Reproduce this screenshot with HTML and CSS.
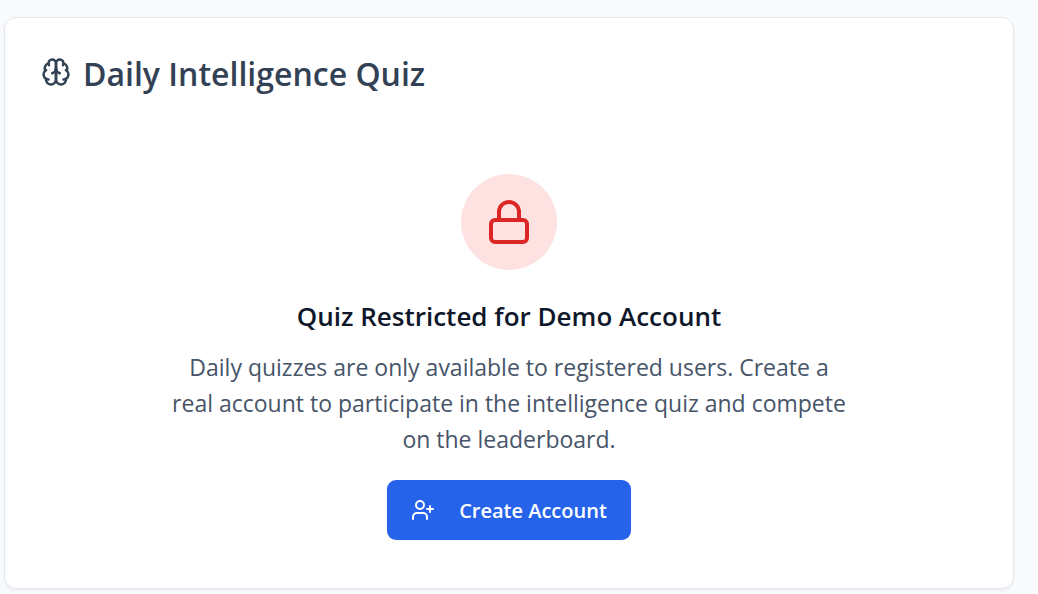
FILE: index.html
```html
<!DOCTYPE html>
<html lang="en">
<head>
<meta charset="utf-8">
<meta name="viewport" content="width=device-width, initial-scale=1">
<title>Daily Intelligence Quiz</title>
<link rel="stylesheet" href="styles.css">
</head>
<body>
<main class="page">
  <section class="card">
    <header class="card-header">
      <svg class="icon icon-brain" viewBox="0 0 24 24" aria-hidden="true">
        <path d="M12 5a3 3 0 1 0-5.997.125 4 4 0 0 0-2.526 5.77 4 4 0 0 0 .556 6.588A4 4 0 1 0 12 18Z"/>
        <path d="M12 5a3 3 0 1 1 5.997.125 4 4 0 0 1 2.526 5.77 4 4 0 0 1-.556 6.588A4 4 0 1 1 12 18Z"/>
        <path d="M15 13a4.5 4.5 0 0 1-3-4 4.5 4.5 0 0 1-3 4"/>
        <path d="M17.599 6.5a3 3 0 0 0 .399-1.375"/>
        <path d="M6.003 5.125A3 3 0 0 0 6.401 6.5"/>
        <path d="M3.477 10.896a4 4 0 0 1 .585-.396"/>
        <path d="M19.938 10.5a4 4 0 0 1 .585.396"/>
        <path d="M6 18a4 4 0 0 1-1.967-.516"/>
        <path d="M19.967 17.484A4 4 0 0 1 18 18"/>
      </svg>
      <h1 class="card-title">Daily Intelligence Quiz</h1>
    </header>
    <div class="notice">
      <div class="badge">
        <svg class="icon icon-lock" viewBox="0 0 24 24" aria-hidden="true">
          <rect x="3" y="11" width="18" height="11" rx="2"/>
          <path d="M7 11V7a5 5 0 0 1 10 0v4"/>
        </svg>
      </div>
      <h2 class="notice-title">Quiz Restricted for Demo Account</h2>
      <p class="notice-text">Daily quizzes are only available to registered users. Create a real account to participate in the intelligence quiz and compete on the leaderboard.</p>
      <button class="button" type="button">
        <svg class="icon icon-user" viewBox="0 0 24 24" aria-hidden="true">
          <path d="M16 21v-2a4 4 0 0 0-4-4H6a4 4 0 0 0-4 4v2"/>
          <circle cx="9" cy="7" r="4"/>
          <path d="M19 8v6M22 11h-6"/>
        </svg>
        Create Account
      </button>
    </div>
  </section>
</main>
</body>
</html>
```
FILE: styles.css
```css
* {
  box-sizing: border-box;
}

body {
  margin: 0;
  background: #f8fafc;
  color: #0f172a;
  font-family: "Segoe UI", "Open Sans", "Noto Sans", sans-serif;
}

.page {
  padding: 17px 24px 5px 4px;
}

.card {
  padding: 36px;
  background: #fff;
  border: 1px solid #e2e8f0;
  border-radius: 12px;
  box-shadow: 0 2px 3px rgba(0, 0, 0, 0.05);
}

.icon {
  display: block;
  flex: none;
  fill: none;
  stroke: currentColor;
  stroke-width: 2;
  stroke-linecap: round;
  stroke-linejoin: round;
}

.card-header {
  display: flex;
  align-items: flex-start;
  gap: 12px;
  color: #334155;
}

.icon-brain {
  width: 30px;
  height: 30px;
  margin-top: 3px;
}

.card-title {
  margin: 0;
  font-size: 32px;
  font-weight: 600;
  line-height: 40px;
}

.notice {
  display: flex;
  flex-direction: column;
  align-items: center;
  padding: 80px 0 12px;
  text-align: center;
}

.badge {
  display: grid;
  place-items: center;
  width: 96px;
  height: 96px;
  margin-bottom: 24px;
  border-radius: 50%;
  background: #fee2e2;
  color: #dc2626;
}

.icon-lock {
  width: 48px;
  height: 48px;
}

.notice-title {
  margin: 0 0 11px;
  font-size: 26px;
  font-weight: 600;
  line-height: 44px;
}

.notice-text {
  max-width: 684px;
  margin: 0 0 23px;
  color: #475569;
  font-size: 23px;
  line-height: 36px;
}

.button {
  display: flex;
  align-items: center;
  gap: 24px;
  height: 60px;
  padding: 0 24px;
  border: 0;
  border-radius: 9px;
  background: #2563eb;
  color: #fff;
  font: inherit;
  font-size: 20px;
  font-weight: 600;
  cursor: pointer;
}

.icon-user {
  width: 24px;
  height: 24px;
}
```
